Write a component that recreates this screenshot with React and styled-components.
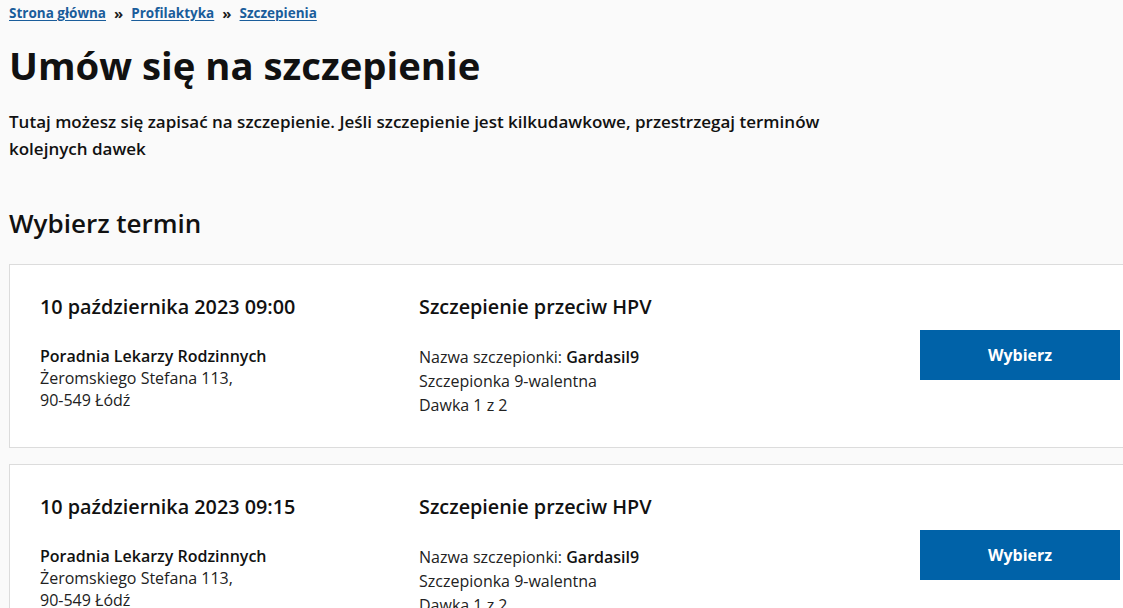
import React from 'react';
import styled, { createGlobalStyle } from 'styled-components';

const GlobalStyle = createGlobalStyle`
  html, body {
    margin: 0;
    padding: 0;
    background: #fafafa;
    overflow: hidden;
  }
  body {
    font-family: "Open Sans", "Liberation Sans", sans-serif;
    color: #1b1b1b;
  }
`;

const Page = styled.main`
  width: 1142px;
  padding: 4px 0 0 9px;
`;

const Breadcrumbs = styled.nav`
  display: flex;
  align-items: center;
  gap: 8px;
  font-size: 13.5px;
  font-weight: 700;
  line-height: 18px;
`;

const Crumb = styled.a`
  color: #1a5d9b;
  text-decoration: underline;
  text-underline-offset: 2px;
`;

const Sep = styled.span`
  color: #1b1b1b;
  font-size: 15px;
`;

const Title = styled.h1`
  margin: 17px 0 0;
  font-size: 38.3px;
  font-weight: 700;
  line-height: 52px;
  color: #111;
`;

const Lead = styled.p`
  margin: 17px 0 0;
  max-width: 830px;
  font-size: 17px;
  font-weight: 600;
  line-height: 27px;
  color: #111;
`;

const SectionTitle = styled.h2`
  margin: 43px 0 0;
  font-size: 26px;
  font-weight: 600;
  line-height: 36px;
  color: #111;
`;

const List = styled.div`
  display: flex;
  flex-direction: column;
  gap: 16px;
  margin-top: 23px;
`;

const Card = styled.article`
  display: grid;
  grid-template-columns: 379px 1fr 200px;
  align-items: center;
  padding: 28px 30px 30px 30px;
  background: #fff;
  border: 1px solid #dcdcdc;
`;

const Col = styled.div`
  align-self: start;
`;

const Heading = styled.h3`
  margin: 0 0 24px;
  font-size: 19.8px;
  font-weight: 600;
  line-height: 28px;
  color: #111;
`;

const Lines = styled.div`
  font-size: 16px;
  line-height: ${p => p.$lh}px;
  color: #222;
`;

const Place = styled.div`
  font-weight: 600;
  color: #111;
`;

const Strong = styled.b`
  font-weight: 600;
  color: #111;
`;

const PickButton = styled.button`
  width: 200px;
  height: 50px;
  border: 0;
  background: #0062a8;
  color: #fff;
  font-family: inherit;
  font-size: 16px;
  font-weight: 700;
  cursor: pointer;
`;

const slots = [
  { date: '10 października 2023 09:00' },
  { date: '10 października 2023 09:15' },
];

export default function App() {
  return (
    <>
      <GlobalStyle />
      <Page>
        <Breadcrumbs>
          <Crumb href="#">Strona główna</Crumb>
          <Sep>»</Sep>
          <Crumb href="#">Profilaktyka</Crumb>
          <Sep>»</Sep>
          <Crumb href="#">Szczepienia</Crumb>
        </Breadcrumbs>
        <Title>Umów się na szczepienie</Title>
        <Lead>
          Tutaj możesz się zapisać na szczepienie. Jeśli szczepienie jest kilkudawkowe, przestrzegaj terminów kolejnych dawek
        </Lead>
        <SectionTitle>Wybierz termin</SectionTitle>
        <List>
          {slots.map(s => (
            <Card key={s.date}>
              <Col>
                <Heading>{s.date}</Heading>
                <Lines $lh={22}>
                  <Place>Poradnia Lekarzy Rodzinnych</Place>
                  <div>Żeromskiego Stefana 113,</div>
                  <div>90-549 Łódź</div>
                </Lines>
              </Col>
              <Col>
                <Heading>Szczepienie przeciw HPV</Heading>
                <Lines $lh={24}>
                  <div>Nazwa szczepionki: <Strong>Gardasil9</Strong></div>
                  <div>Szczepionka 9-walentna</div>
                  <div>Dawka 1 z 2</div>
                </Lines>
              </Col>
              <PickButton>Wybierz</PickButton>
            </Card>
          ))}
        </List>
      </Page>
    </>
  );
}
